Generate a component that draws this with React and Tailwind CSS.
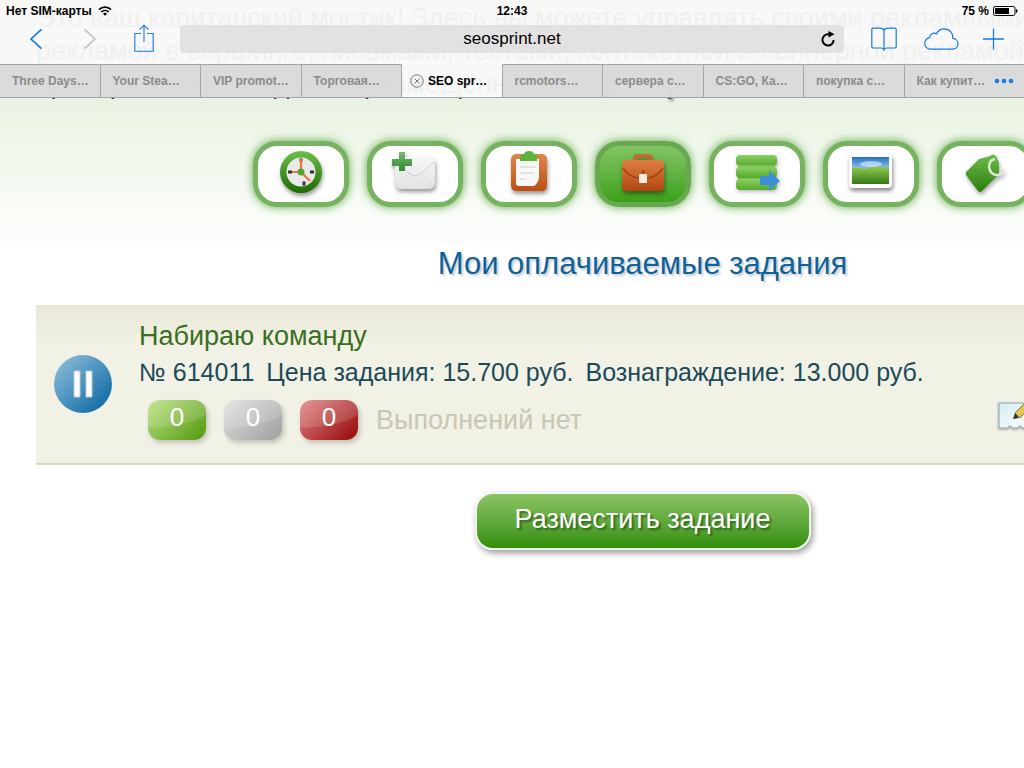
import { useState } from "react";
import clsx from "clsx";

const tabs = [
  "Three Days…",
  "Your Stea…",
  "VIP promot…",
  "Торговая…",
  "SEO spr…",
  "rcmotors…",
  "сервера с…",
  "CS:GO, Ка…",
  "покупка с…",
  "Как купит…",
];

function StatusBar() {
  return (
    <div className="flex h-5 items-center justify-between px-1.5 pt-px text-xs font-bold text-black">
      <div className="flex flex-1 items-center gap-1.5">
        <span>Нет SIM-карты</span>
        <svg width="14" height="10" viewBox="0 0 14 10" fill="none" stroke="#000" strokeWidth="1.7">
          <path d="M1 3.6a8.6 8.6 0 0 1 12 0" />
          <path d="M3.2 6a5.5 5.5 0 0 1 7.6 0" />
          <path d="M5 7.7a2.9 2.9 0 0 1 4 0L7 9.8Z" fill="#000" stroke="none" />
        </svg>
      </div>
      <span>12:43</span>
      <div className="flex flex-1 items-center justify-end gap-1">
        <span>75 %</span>
        <svg width="25" height="10" viewBox="0 0 25 10">
          <rect x="0.5" y="0.5" width="21.5" height="9" rx="1.8" fill="none" stroke="#000" />
          <rect x="2" y="2" width="14" height="6" fill="#000" />
          <path d="M23 3v4q1.6-.6 1.6-2T23 3Z" fill="#000" />
        </svg>
      </div>
    </div>
  );
}

function Toolbar() {
  return (
    <div className="flex h-11 items-center pb-1.5">
      <div className="flex items-center px-[9px] text-[#1679e8]">
        <button aria-label="Назад" className="flex w-[54px] justify-center">
          <svg width="14" height="22" viewBox="0 0 14 22" fill="none" stroke="currentColor" strokeWidth="1.7">
            <path d="M12.5 1.3 2 11l10.5 9.7" />
          </svg>
        </button>
        <button aria-label="Вперёд" className="flex w-[54px] justify-center text-[#c4c4c4]">
          <svg width="14" height="22" viewBox="0 0 14 22" fill="none" stroke="currentColor" strokeWidth="1.7">
            <path d="M1.5 1.3 12 11 1.5 20.7" />
          </svg>
        </button>
        <button aria-label="Поделиться" className="flex w-[54px] justify-center">
          <svg width="20" height="30" viewBox="0 0 20 30" fill="none" stroke="currentColor" strokeWidth="1.1">
            <path d="M7 9.5H.8v17.7h18.4V9.5H13M10 1.2V18M5.5 5.7 10 1.2l4.5 4.5" />
          </svg>
        </button>
      </div>
      <div className="flex h-7 flex-1 items-center rounded bg-[#dedede]/85 pl-8">
        <input
          aria-label="Адрес"
          defaultValue="seosprint.net"
          className="w-full min-w-0 flex-1 bg-transparent text-center text-[17px] text-black outline-none"
        />
        <button aria-label="Обновить" className="flex w-8 justify-center">
          <svg width="14" height="17" viewBox="0 0 14 17">
            <path d="M8.5 3.3H7a5.6 5.6 0 1 0 5.6 5.7" fill="none" stroke="#000" strokeWidth="2" />
            <path d="M7.5 0 13.5 3.2 7.5 6.6Z" fill="#000" />
          </svg>
        </button>
      </div>
      <div className="flex items-center pl-3 pr-[3px] text-[#1679e8]">
        <button aria-label="Закладки" className="flex w-[55px] justify-center">
          <svg width="26" height="25" viewBox="0 0 26 25" fill="none" stroke="currentColor" strokeWidth="1.2">
            <path d="M13 24V3.5C12.5 2 11 1.2 9 1.2H2Q.8 1.2.8 2.4v17.4Q.8 21 2 21h8q2 0 3 1.3Q14 21 16 21h8q1.2 0 1.2-1.2V2.4Q25.2 1.2 24 1.2h-7c-2 0-3.5.8-4 2.3" />
          </svg>
        </button>
        <button aria-label="Вкладки iCloud" className="flex w-[55px] justify-center">
          <svg width="40" height="22" viewBox="-5 0 40 22" fill="none" stroke="currentColor" strokeWidth="1.2">
            <path d="M6.5 21.2h21.7c3.3 0 5.8-2.2 5.8-5.4 0-3-2.3-5.2-5.2-5.4C29.2 5 25.5.8 20.3.8c-3.6 0-6.5 1.9-7.9 5.1C9.6 4.2 5.8 5.7 5.6 9.7 2.7 10.3.8 12.6.8 15.5c0 3.3 2.5 5.7 5.7 5.7Z" />
          </svg>
        </button>
        <button aria-label="Новая вкладка" className="flex w-[55px] justify-center">
          <svg width="21" height="22" viewBox="0 0 21 22" fill="none" stroke="currentColor" strokeWidth="1.3">
            <path d="M10.5 .5v21M0 11h21" />
          </svg>
        </button>
      </div>
    </div>
  );
}

function TabBar() {
  const [active, setActive] = useState(4);
  return (
    <div className="flex h-[34px] border-b border-[#a5a5a5] text-xs font-bold">
      {tabs.map((tab, i) => (
        <button
          key={tab}
          onClick={() => setActive(i)}
          className={clsx(
            "flex w-0 flex-1 items-center whitespace-nowrap",
            i === active ? "text-black" : "border-t border-[#a5a5a5] bg-[#d6d6d6]/85 text-[#8b8b8b]",
            i < tabs.length - 1 && "border-r border-r-[#a5a5a5]"
          )}
        >
          <span className={clsx("flex items-center gap-1", i === active ? "pl-2" : "pl-3")}>
            {i === active && (
              <svg width="14" height="14" viewBox="0 0 14 14" fill="none" stroke="#777">
                <circle cx="7" cy="7" r="6.2" />
                <path d="m4.5 4.5 5 5m0-5-5 5" />
              </svg>
            )}
            {tab}
          </span>
        </button>
      ))}
      <button aria-label="Ещё вкладки" className="flex w-5 items-center border-t border-[#a5a5a5] bg-[#d6d6d6]/85">
        <svg width="20" height="6" viewBox="9 0 20 6" overflow="visible" fill="#1679e8">
          <circle cx="2" cy="3" r="2.3" />
          <circle cx="9" cy="3" r="2.3" />
          <circle cx="16" cy="3" r="2.3" />
        </svg>
      </button>
    </div>
  );
}

function ClockIcon() {
  return (
    <svg width="48" height="48" viewBox="0 0 48 48" className="drop-shadow-[1px_3px_2px_#0006]">
      <defs>
        <linearGradient id="clock" x1="0" y1="0" x2="0" y2="1">
          <stop offset="0" stopColor="#6cc04a" />
          <stop offset="1" stopColor="#1d6a04" />
        </linearGradient>
      </defs>
      <circle cx="24" cy="22" r="21" fill="url(#clock)" />
      <circle cx="24" cy="22" r="14.5" fill="#e9e9e9" />
      <path d="M24 8.5v3M27 31.500v4M11 22h4M33 22h4" stroke="#333" strokeWidth="3" />
      <path d="M24 22V9M24 22h-9M24 22l9 9" stroke="#ee7440" strokeWidth="2.2" />
      <circle cx="24" cy="22" r="3.5" fill="#4fa82d" />
    </svg>
  );
}

function MailIcon() {
  return (
    <svg width="48" height="48" viewBox="0 0 48 48" className="drop-shadow-[1px_3px_2px_#0006]">
      <defs>
        <linearGradient id="mail" x1="0" y1="0" x2="0" y2="1">
          <stop offset="0" stopColor="#f7f7f7" />
          <stop offset="1" stopColor="#e2e2e2" />
        </linearGradient>
        <linearGradient id="plus" x1="0" y1="0" x2="0" y2="1">
          <stop offset="0" stopColor="#74b774" />
          <stop offset="1" stopColor="#318b31" />
        </linearGradient>
      </defs>
      <rect x="4" y="7" width="40" height="32" rx="6" fill="url(#mail)" />
      <path d="m6 36 13-14M42 36 29 22" stroke="#dcdcdc" fill="none" />
      <path d="M5 12q14 14 19 14t19-14" stroke="#cfcfcf" fill="none" />
      <path d="M8 2h6v7h7v7h-7v5H8v-5H1V9h7Z" fill="url(#plus)" />
    </svg>
  );
}

function ClipboardIcon() {
  return (
    <svg width="48" height="48" viewBox="0 0 48 48" className="drop-shadow-[1px_3px_2px_#0006]">
      <defs>
        <linearGradient id="board" x1="0" y1="0" x2="0" y2="1">
          <stop offset="0" stopColor="#e0874c" />
          <stop offset="1" stopColor="#bb4f15" />
        </linearGradient>
      </defs>
      <rect x="6" y="4" width="36" height="37" rx="5" fill="url(#board)" />
      <path d="M11 9h23v19q-1 5-5 8H14q-3 0-3-3Z" fill="#f8f8f8" />
      <path d="M15 17h16M15 23h14M15 29h5" stroke="#ddd" strokeWidth="1.5" />
      <path d="M15 11V7q0-3 4-3 1-3 5-3t5 3q3 0 3 3v4Z" fill="#5cb43a" />
    </svg>
  );
}

function BriefcaseIcon() {
  return (
    <svg width="48" height="48" viewBox="0 0 48 48" className="drop-shadow-[1px_3px_2px_#0006]">
      <defs>
        <linearGradient id="bag" x1="0" y1="0" x2="0" y2="1">
          <stop offset="0" stopColor="#e0803f" />
          <stop offset="1" stopColor="#af4711" />
        </linearGradient>
      </defs>
      <path d="M16 11V8q0-2 2-2h12q2 0 2 2v3" fill="none" stroke="#c6682c" strokeWidth="3.5" />
      <rect x="3" y="10" width="42" height="31" rx="4" fill="url(#bag)" />
      <path d="M4 18q7 10 16 10h8q9 0 16-10" fill="none" stroke="#a5450f" strokeWidth="1.5" />
      <rect x="20" y="24" width="8" height="9" rx="1" fill="#f0ece4" />
      <circle cx="24" cy="22" r="1.8" fill="#a5450f" />
    </svg>
  );
}

function ListIcon() {
  return (
    <svg width="48" height="48" viewBox="0 0 48 48" className="drop-shadow-[1px_2px_2px_#0004]">
      <defs>
        <linearGradient id="bar" x1="0" y1="0" x2="0" y2="1">
          <stop offset="0" stopColor="#8bd061" />
          <stop offset="1" stopColor="#55a82c" />
        </linearGradient>
      </defs>
      <rect x="3" y="5" width="41" height="11" rx="4" fill="url(#bar)" />
      <path d="M5 15h37v15H5Z" fill="#7cc153" />
      <rect x="3" y="17" width="41" height="11" rx="4" fill="url(#bar)" />
      <rect x="3" y="29" width="41" height="11" rx="4" fill="url(#bar)" />
      <path d="M27 26h9v-6l11 11-11 10v-6h-9Z" fill="#3c8fd6" />
    </svg>
  );
}

function PhotoIcon() {
  return (
    <svg width="48" height="48" viewBox="0 0 48 48" className="drop-shadow-[1px_3px_2px_#0007]">
      <defs>
        <linearGradient id="sky" x1="0" y1="0" x2="0" y2="1">
          <stop offset="0" stopColor="#2370bd" />
          <stop offset="1" stopColor="#b8dcf3" />
        </linearGradient>
        <linearGradient id="grass" x1="0" y1="0" x2="0" y2="1">
          <stop offset="0" stopColor="#8fc94c" />
          <stop offset="1" stopColor="#357a1a" />
        </linearGradient>
      </defs>
      <rect x="2" y="4" width="43" height="34" rx="4" fill="#fff" />
      <rect x="5" y="7" width="37" height="15" fill="url(#sky)" />
      <ellipse cx="24" cy="14" rx="11" ry="3" fill="#fff" opacity=".5" />
      <path d="M5 18q6-1 12 1 12-4 25-1v16H5Z" fill="url(#grass)" />
    </svg>
  );
}

function TagIcon() {
  return (
    <svg width="48" height="48" viewBox="0 0 48 48" className="drop-shadow-[1px_3px_2px_#0005]">
      <defs>
        <linearGradient id="tag" x1="0" y1="0" x2="0" y2="1">
          <stop offset="0" stopColor="#6dbb47" />
          <stop offset="1" stopColor="#2c7d10" />
        </linearGradient>
      </defs>
      <path d="M5 25q-1-2 1-4L18 9l11-3q3-3 6 0l3 7v11L21 41q-2 2-4 0Z" fill="url(#tag)" />
      <path d="M34 9q-6 1-6 8 1 7 7 8 7 0 8-6" fill="none" stroke="#dfe8da" strokeWidth="2.5" />
    </svg>
  );
}

const sections = [
  { label: "Серфинг", Icon: ClockIcon },
  { label: "Письма", Icon: MailIcon },
  { label: "Тесты", Icon: ClipboardIcon },
  { label: "Задания", Icon: BriefcaseIcon, current: true },
  { label: "Контекстная реклама", Icon: ListIcon },
  { label: "Баннеры", Icon: PhotoIcon },
  { label: "Цены", Icon: TagIcon },
];

function SectionNav() {
  return (
    <nav className="mt-10 flex justify-center gap-[18px]">
      {sections.map(({ label, Icon, current }) => (
        <a
          key={label}
          href="#"
          aria-label={label}
          className={clsx(
            "flex h-[66px] w-24 shrink-0 items-center justify-center rounded-3xl border-[5px] shadow-[0_0_10px_#5ea844]",
            current ? "border-[#68a851] bg-linear-to-b from-[#82c463] to-[#3aa114]" : "border-[#76b260] bg-white"
          )}
        >
          <Icon />
        </a>
      ))}
    </nav>
  );
}

function PauseIcon() {
  return (
    <svg width="58" height="58" viewBox="0 0 58 58">
      <defs>
        <linearGradient id="pause" x1="0" y1="0" x2="1" y2="1">
          <stop offset="0.15" stopColor="#7fb4d4" />
          <stop offset="0.85" stopColor="#1670a8" />
        </linearGradient>
      </defs>
      <circle cx="29" cy="29" r="29" fill="url(#pause)" />
      <path d="M20 16h6v26h-6ZM32 16h6v26h-6Z" fill="#fff" stroke="#b9cdd6" />
    </svg>
  );
}

function EditIcon() {
  return (
    <svg width="40" height="32" viewBox="0 0 40 32" className="drop-shadow-[0_1px_1px_#0005]">
      <defs>
        <linearGradient id="paper" x1="0" y1="0" x2="1" y2="1">
          <stop offset="0" stopColor="#d5ecf0" />
          <stop offset="1" stopColor="#fff" />
        </linearGradient>
      </defs>
      <path d="M1 3h38v25h-4l-3-2-3 2h-4l-3-2-3 2h-4l-3-2-3 2H1Z" fill="url(#paper)" stroke="#a9bfc0" strokeWidth="1.5" />
      <path d="m17 13 11-11 5 4-11 12Z" fill="#e3c653" stroke="#8a7734" />
      <path d="m17 13-2 6 6-1Z" fill="#333" />
    </svg>
  );
}

const badge =
  "h-10 w-[58px] rounded-xl text-center text-[26px] leading-[34px] text-white shadow-[2px_3px_5px_#0003]";

function TaskRow() {
  return (
    <section className="mt-[23px] flex h-40 items-center border-b-2 border-[#d9dac1] bg-linear-to-b from-[#e9e8d7] to-[#f1f1e5] to-25% pl-[18px]">
      <button aria-label="Приостановить">
        <PauseIcon />
      </button>
      <div className="ml-[27px] flex-1 self-start whitespace-nowrap pt-[13px]">
        <a href="#" className="block text-[27px] leading-9 text-[#3a6f22]">
          Набираю команду
        </a>
        <p className="flex gap-3 text-[25px] leading-9 text-[#1c4a58]">
          <span>№ 614011</span>
          <span>Цена задания: 15.700 руб.</span>
          <span>Вознаграждение: 13.000 руб.</span>
        </p>
        <div className="mt-2.5 flex items-center gap-[18px] pl-[9px]">
          <a
            href="#"
            className={clsx(badge, "bg-[radial-gradient(130%_110%_at_10%_-40%,#fff2_97%,transparent_100%),linear-gradient(135deg,#b0da78_10%,#5ca01a_90%)]")}
          >
            0
          </a>
          <a
            href="#"
            className={clsx(badge, "bg-[radial-gradient(130%_110%_at_10%_-40%,#fff2_97%,transparent_100%),linear-gradient(135deg,#d9d9d9_10%,#a6a6a6_90%)]")}
          >
            0
          </a>
          <a
            href="#"
            className={clsx(badge, "bg-[radial-gradient(130%_110%_at_10%_-40%,#fff2_97%,transparent_100%),linear-gradient(135deg,#d97878_10%,#9c1414_90%)]")}
          >
            0
          </a>
          <span className="text-[27px] leading-10 text-[#c9c7b3]">Выполнений нет</span>
        </div>
      </div>
      <div className="w-[251px] shrink-0 pt-16">
        <button aria-label="Редактировать" className="block">
          <EditIcon />
        </button>
      </div>
    </section>
  );
}

export default function App() {
  return (
    <div className="relative min-h-screen overflow-hidden bg-white font-['Liberation_Sans',Arial,sans-serif]">
      <header className="absolute inset-x-0 top-0 z-10 bg-[#f8f8f8]/96">
        <StatusBar />
        <Toolbar />
        <TabBar />
      </header>

      {/* the site is zoomed in, so it runs past the right edge of the window */}
      <main className="-mr-[261px] bg-linear-to-b from-[#dbebd0] to-white to-[255px] px-9">
        <p className="whitespace-nowrap pt-0.5 text-[27px] leading-[33px] text-[#333]">
          Это ваш капитанский мостик! Здесь вы можете управлять своими рекламными
          <br />
          рекламой в серфинге, письмами, тестами, контекстной и баннерной рекламой,
          <br />
          проверять ваши задания, размещённые на{" "}
          <b className="text-[#2d5a4a] [text-shadow:2px_2px_3px_#0006]">SEO sprint.</b>
        </p>
        <SectionNav />
        <h1 className="mt-[39px] text-center text-[31px] leading-9 text-[#0d629b] [text-shadow:2px_2px_2px_#0003]">
          Мои оплачиваемые задания
        </h1>
        <TaskRow />
        <div className="flex justify-center pt-[27px]">
          <button className="h-[58px] w-[336px] rounded-[18px] border-2 border-[#f1f5ee] bg-linear-to-b from-[#8bc463] to-[#2f8f00] pb-1 text-[27px] text-white shadow-[2px_3px_6px_#0006] [text-shadow:2px_2px_2px_#0006]">
            Разместить задание
          </button>
        </div>
      </main>
    </div>
  );
}
